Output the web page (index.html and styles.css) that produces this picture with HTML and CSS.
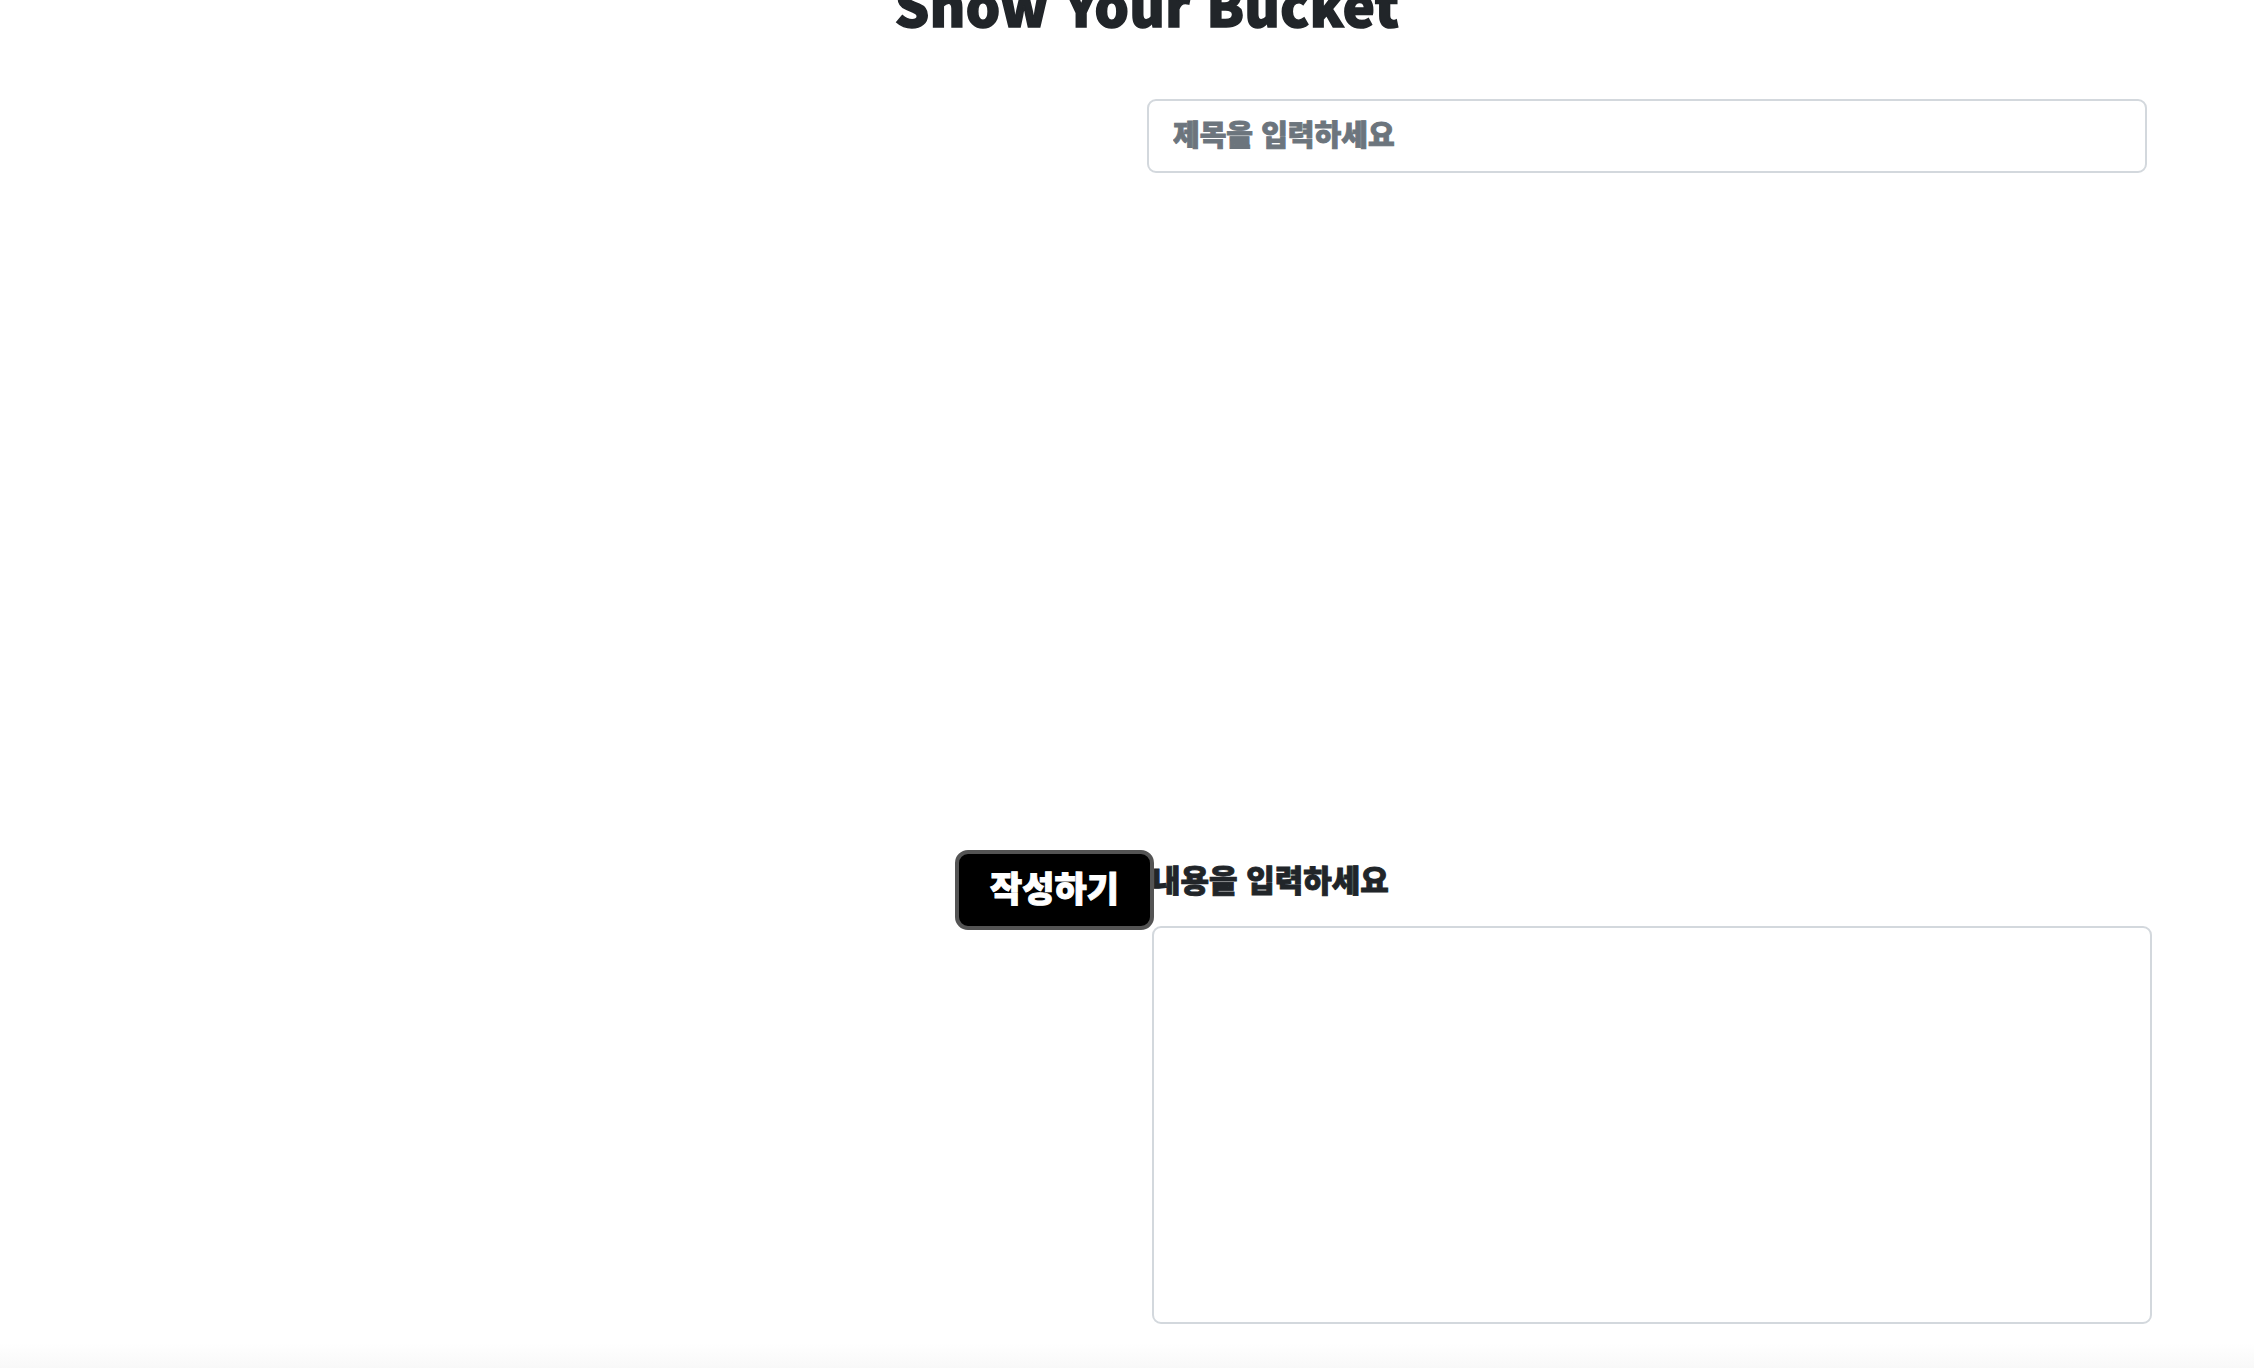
FILE: index.html
```html
<!DOCTYPE html>
<html lang="ko">
<head>
<meta charset="utf-8">
<title>Show Your Bucket</title>
<link rel="stylesheet" href="styles.css">
</head>
<body>
<main class="page">
  <h1 class="title">Show Your Bucket</h1>
  <div class="title-row">
    <input class="field title-input" type="text" placeholder="제목을 입력하세요">
  </div>
  <div class="content-row">
    <button class="submit" type="button">작성하기</button>
    <div class="content-col">
      <label class="content-label" for="content">내용을 입력하세요</label>
      <textarea id="content" class="field content-area"></textarea>
    </div>
  </div>
  <div class="fade"></div>
</main>
</body>
</html>
```

FILE: styles.css
```css
html, body {
  margin: 0;
  padding: 0;
  background: #ffffff;
}

body {
  height: 1368px;
  overflow: hidden;
  font-family: "Noto Sans CJK KR", "Noto Sans", sans-serif;
  color: #212529;
}

.page {
  display: flex;
  flex-direction: column;
}

.title {
  margin: -22px 0 0;
  padding-left: 40px;
  text-align: center;
  font-size: 54px;
  line-height: 52px;
  font-weight: 900;
  color: #212529;
  -webkit-text-stroke: 1.6px #212529;
  letter-spacing: 0.5px;
}

.title-row {
  display: flex;
  justify-content: flex-end;
  padding-right: 107px;
  margin-top: 69px;
}

.field {
  box-sizing: border-box;
  border: 2px solid #d3d8dd;
  border-radius: 9px;
  background: #ffffff;
  font-family: "Noto Sans CJK KR", "Noto Sans", sans-serif;
  outline: none;
}

.title-input {
  width: 1000px;
  height: 74px;
  padding: 0 24px 6px;
  font-size: 29px;
  font-weight: 900;
  color: #6c757d;
  -webkit-text-stroke: 0.9px #6c757d;
}

.title-input::placeholder {
  color: #6c757d;
  opacity: 1;
}

.content-row {
  display: flex;
  justify-content: flex-end;
  align-items: flex-start;
  padding-right: 102px;
  margin-top: 677px;
}

.submit {
  box-sizing: border-box;
  width: 199px;
  height: 80px;
  margin: 0 -2px 0 0;
  padding: 0 0 8px;
  background: #000000;
  color: #ffffff;
  border: 4px solid #545454;
  border-radius: 13px;
  font-family: "Noto Sans CJK KR", "Noto Sans", sans-serif;
  font-size: 35px;
  font-weight: 900;
  line-height: 1;
  -webkit-text-stroke: 1px #ffffff;
  position: relative;
  z-index: 1;
}

.content-col {
  display: flex;
  flex-direction: column;
  width: 1000px;
}

.content-label {
  padding-top: 9px;
  height: 40px;
  margin-bottom: 27px;
  font-size: 31px;
  line-height: 40px;
  font-weight: 900;
  color: #212529;
  -webkit-text-stroke: 0.9px #212529;
}

.content-area {
  width: 1000px;
  height: 398px;
  resize: none;
}

.fade {
  height: 30px;
  margin-top: 19px;
  background: linear-gradient(to bottom, #ffffff, #f7f7f7);
}
```
